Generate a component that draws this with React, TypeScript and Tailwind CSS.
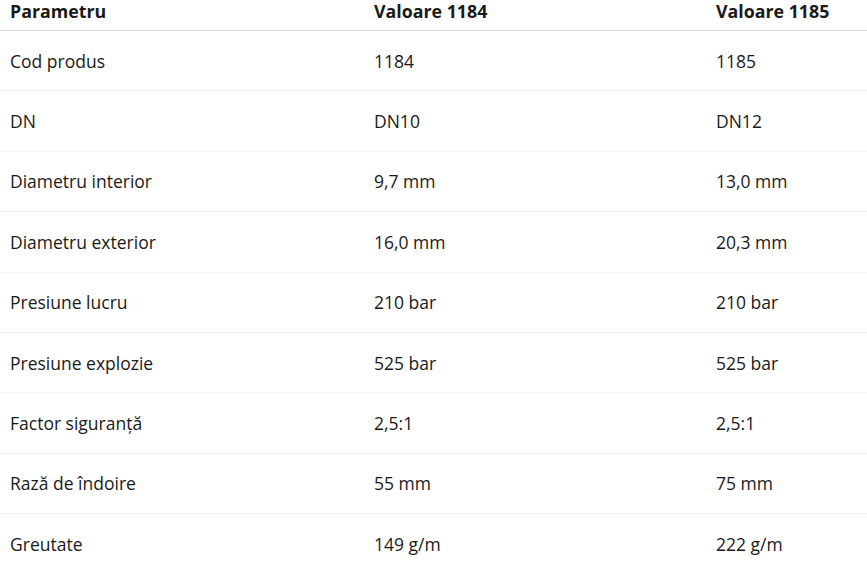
const rows: [string, string, string][] = [
  ["Cod produs", "1184", "1185"],
  ["DN", "DN10", "DN12"],
  ["Diametru interior", "9,7 mm", "13,0 mm"],
  ["Diametru exterior", "16,0 mm", "20,3 mm"],
  ["Presiune lucru", "210 bar", "210 bar"],
  ["Presiune explozie", "525 bar", "525 bar"],
  ["Factor siguranță", "2,5:1", "2,5:1"],
  ["Rază de îndoire", "55 mm", "75 mm"],
  ["Greutate", "149 g/m", "222 g/m"],
];

export default function App() {
  return (
    <div className="h-[571px] w-[867px] overflow-hidden bg-white font-['Open_Sans',sans-serif] text-[17.5px] text-[#1a1a1a]">
      <table className="w-full border-collapse">
        <thead>
          <tr className="border-b border-[#d9d9d9] text-left text-[17.8px]">
            <th className="h-[30px] w-[364px] pl-[10px] pb-2 align-top font-bold leading-[22px]">Parametru</th>
            <th className="w-[342px] pl-[10px] pb-2 align-top font-bold leading-[22px]">Valoare 1184</th>
            <th className="pl-[10px] pb-2 align-top font-bold leading-[22px]">Valoare 1185</th>
          </tr>
        </thead>
        <tbody>
          {rows.map((r, i) => (
            <tr key={i} className="border-b border-[#efefef]">
              <td className="h-[60.4px] pl-[10px] align-middle leading-[22px]">{r[0]}</td>
              <td className="pl-[10px] align-middle leading-[22px]">{r[1]}</td>
              <td className="pl-[10px] align-middle leading-[22px]">{r[2]}</td>
            </tr>
          ))}
        </tbody>
      </table>
    </div>
  );
}
